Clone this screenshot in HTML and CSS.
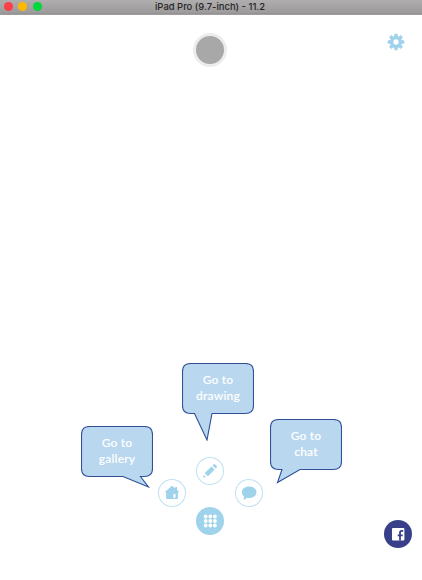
FILE: index.html
```html
<!DOCTYPE html>
<html lang="en">
<head>
<meta charset="utf-8">
<title>iPad Pro (9.7-inch) - 11.2</title>
<link rel="stylesheet" href="styles.css">
</head>
<body>
<div class="window">
  <div class="titlebar">
    <div class="lights"><i class="light close"></i><i class="light minimize"></i><i class="light expand"></i></div>
    <div class="title">iPad Pro (9.7-inch) - 11.2</div>
  </div>
  <header class="header">
    <div class="avatar"></div>
    <svg class="gear" viewBox="-9 -9 18 18">
      <g fill="#9fd2eb">
        <circle r="6"/>
        <path id="teeth" d="M-1.9-5.3L-1.5-8.3H1.5L1.9-5.3V5.3L1.5 8.3H-1.5L-1.9 5.3Z"/>
        <use href="#teeth" transform="rotate(45)"/>
        <use href="#teeth" transform="rotate(90)"/>
        <use href="#teeth" transform="rotate(135)"/>
      </g>
      <circle r="2.7" fill="#fff"/>
    </svg>
  </header>
  <main class="canvas">
    <nav class="menu">
      <button class="round pencil">
        <svg viewBox="0 0 28 28"><path d="M9.3 15.6L15.5 9.4L18.7 12.6L12.5 18.8Q11.8 19.3 11 18.6L9.4 17Q8.7 16.2 9.3 15.6ZM16.5 8.4L17.5 7.4Q18.3 6.7 19.1 7.4L20.7 9Q21.4 9.8 20.7 10.6L19.7 11.6ZM7.8 18L9.9 20L7.5 20.6Q7.1 20.6 7.2 20Z"/></svg>
        <span class="callout to-drawing">
          <svg class="bubble" viewBox="0 0 72 78"><path d="M8.5.5H63.5Q71.5.5 71.5 8.5V42.5Q71.5 50.5 63.5 50.5H30L25 77L12.5 50.5H8.5Q.5 50.5.5 42.5V8.5Q.5.5 8.5.5Z"/></svg>
          <span class="label">Go to<br>drawing</span>
        </span>
      </button>
      <div class="sides">
        <button class="round home">
          <svg viewBox="0 0 28 28"><path d="M14 6.8L17.3 9.5V8H19V11L21 12.7Q21.2 13.5 20.3 13.5H19.9V19.2Q19.9 20 19.1 20H8.9Q8.1 20 8.1 19.2V13.5H7.7Q6.8 13.5 7.1 12.7Z"/><path class="cut" d="M15.4 14.9H17.5V18.9H15.4Z"/></svg>
          <span class="callout to-gallery">
            <svg class="bubble" viewBox="0 0 72 78"><path d="M8.5.5H63.5Q71.5.5 71.5 8.5V42.5Q71.5 50.5 63.5 50.5H59.5L67.5 61L42 50.5H8.5Q.5 50.5.5 42.5V8.5Q.5.5 8.5.5Z"/></svg>
            <span class="label">Go to<br>gallery</span>
          </span>
        </button>
        <button class="round chat">
          <svg viewBox="0 0 28 28"><path d="M14.2 7.4C18.5 7.4 21.5 9.9 21.5 13.3S18.3 19 14.2 19Q13 19 11.9 18.7Q10.4 20.5 8.1 20.6Q9.2 19 9.2 17.6Q6.8 16 6.8 13.3C6.8 9.9 9.9 7.4 14.2 7.4Z"/></svg>
          <span class="callout to-chat">
            <svg class="bubble" viewBox="0 0 72 78"><path d="M8.5.5H63.5Q71.5.5 71.5 8.5V42.5Q71.5 50.5 63.5 50.5H30L7.5 63.5L12 50.5H8.5Q.5 50.5.5 42.5V8.5Q.5.5 8.5.5Z"/></svg>
            <span class="label">Go to<br>chat</span>
          </span>
        </button>
      </div>
      <button class="round grid">
        <svg viewBox="0 0 28 28"><circle cx="9.7" cy="9.5" r="1.9"/><circle cx="14.3" cy="9.5" r="1.9"/><circle cx="18.9" cy="9.5" r="1.9"/><circle cx="9.7" cy="14" r="1.9"/><circle cx="14.3" cy="14" r="1.9"/><circle cx="18.9" cy="14" r="1.9"/><circle cx="9.7" cy="18.5" r="1.9"/><circle cx="14.3" cy="18.5" r="1.9"/><circle cx="18.9" cy="18.5" r="1.9"/></svg>
      </button>
    </nav>
    <button class="round facebook">
      <svg viewBox="0 0 28 28"><rect x="8" y="8" width="12.4" height="12.6" rx="1"/><path d="M16 20.6V14.6M13.7 15.3H18.7M16 16V12.6Q16 10.9 17.7 10.9H19.2"/></svg>
    </button>
  </main>
</div>
</body>
</html>
```

FILE: styles.css
```css
* { box-sizing: border-box; }
body { margin: 0; background: #fff; }
.window {
  display: flex;
  flex-direction: column;
  width: 422px;
  height: 580px;
  overflow: hidden;
}
.titlebar {
  display: grid;
  grid-template-columns: 59px 1fr 61px;
  align-items: center;
  height: 15px;
  padding-bottom: 1px;
  background: linear-gradient(#b0adae, #9c9a9b 13px, #8e8c8d 13px, #a5a4a4 15px);
}
.lights { display: flex; gap: 5.4px; padding: 0 0 1px 3.7px; }
.light { width: 9.2px; height: 9.2px; border-radius: 50%; }
.close { background: #fc3e49; }
.minimize { background: #fdb900; }
.expand { background: #00d83b; }
.title {
  font: 500 9.45px/12px Inter, "Liberation Sans", sans-serif;
  color: #262525;
  text-align: center;
  white-space: nowrap;
}
.header {
  display: grid;
  grid-template-columns: 1fr 34px 1fr;
  padding: 18px 17px 0 15px;
}
.avatar {
  grid-column: 2;
  width: 34px;
  height: 34px;
  border: 3px solid #ececec;
  border-radius: 50%;
  background: #a8a8a8;
}
.gear { width: 18px; height: 18px; justify-self: end; }
.canvas {
  flex: 1;
  display: grid;
  grid-template-columns: 1fr 105px 1fr;
  align-items: end;
  padding: 0 10px 32px 9px;
}
.menu {
  grid-column: 2;
  display: flex;
  flex-direction: column;
  align-items: center;
  width: 105px;
  padding-bottom: 13px;
}
.sides {
  display: flex;
  justify-content: space-between;
  width: 105px;
  margin: -6px 0 0;
}
.round {
  position: relative;
  flex: none;
  width: 28px;
  height: 28px;
  padding: 0;
  border: 0;
  border-radius: 50%;
  background: #fff;
  box-shadow: inset 0 0 0 1px #bfe1f1;
  fill: #9fd2eb;
}
.pencil, .grid { margin-right: 0.4px; }
.round > svg { display: block; width: 28px; height: 28px; }
.cut { fill: #fff; }
.grid { background: #9fd2eb; box-shadow: none; fill: #fff; }
.facebook {
  justify-self: end;
  background: #38408a;
  box-shadow: none;
  fill: #fff;
}
.facebook path { fill: none; stroke: #38408a; stroke-width: 1.8; }
.callout { position: absolute; width: 72px; height: 78px; }
.to-drawing { left: -14.3px; top: -94px; }
.to-gallery { left: -77px; top: -53px; }
.to-chat { left: 35px; top: -60px; }
.bubble {
  display: block;
  width: 72px;
  height: 78px;
  fill: #b9d7ef;
  stroke: #304f96;
  stroke-width: 1.1;
}
.label {
  position: absolute;
  left: 0;
  top: 9px;
  width: 72px;
  font: 600 12px/16px Lato, "Open Sans", sans-serif;
  letter-spacing: 0.2px;
  color: #fff;
  text-align: center;
}
```
